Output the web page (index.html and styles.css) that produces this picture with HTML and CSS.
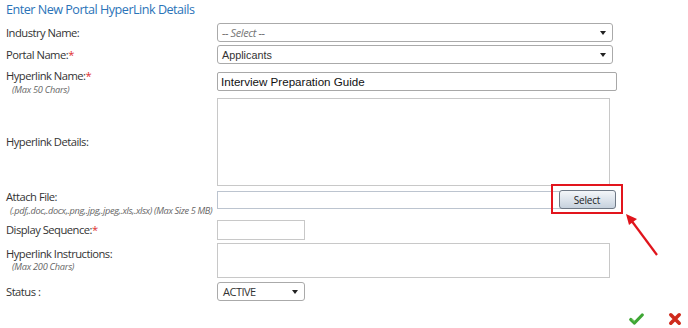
FILE: index.html
```html
<!DOCTYPE html>
<html>
<head>
<meta charset="utf-8">
<link rel="stylesheet" href="styles.css">
</head>
<body>
<div class="page">
  <h1 class="title">Enter New Portal HyperLink Details</h1>
  <div class="row r1">
    <div class="label">Industry Name:</div>
    <div class="ctl"><div class="select wide"><span class="ph">-- Select --</span><span class="caret"></span></div></div>
  </div>
  <div class="row r2">
    <div class="label">Portal Name:<span class="req">*</span></div>
    <div class="ctl"><div class="select wide"><span class="val">Applicants</span><span class="caret"></span></div></div>
  </div>
  <div class="row r3 top">
    <div class="label">Hyperlink Name:<span class="req">*</span><div class="hint">(Max 50 Chars)</div></div>
    <div class="ctl"><div class="input name">Interview Preparation Guide</div></div>
  </div>
  <div class="row r4">
    <div class="label">Hyperlink Details:</div>
    <div class="ctl"><div class="textarea details"></div></div>
  </div>
  <div class="row r5 top">
    <div class="label">Attach File:<div class="hint hint2">(.pdf,.doc,.docx,.png,.jpg,.jpeg,.xls,.xlsx) (Max Size 5 MB)</div></div>
    <div class="ctl file">
      <div class="input filebox"></div>
      <div class="btnwrap"><button class="btn">Select</button></div>
      <svg class="arrow" width="40" height="50" viewBox="0 0 40 50"><line x1="34" y1="44" x2="8" y2="9" stroke="#e0141c" stroke-width="2.2"/><polygon points="3,3 14,8 6,14" fill="#e0141c"/></svg>
    </div>
  </div>
  <div class="row r6">
    <div class="label">Display Sequence:<span class="req">*</span></div>
    <div class="ctl"><div class="input seq"></div></div>
  </div>
  <div class="row r7 top">
    <div class="label">Hyperlink Instructions:<div class="hint">(Max 200 Chars)</div></div>
    <div class="ctl"><div class="textarea instr"></div></div>
  </div>
  <div class="row r8">
    <div class="label">Status :</div>
    <div class="ctl"><div class="select status"><span class="val2">ACTIVE</span><span class="caret"></span></div></div>
  </div>
  <div class="actions">
    <svg class="ok" width="15" height="12" viewBox="0 0 15 12"><path d="M1.8 6.5 L5.5 10 L13.2 2" fill="none" stroke="#3ea634" stroke-width="3.2" stroke-linecap="round" stroke-linejoin="round"/><path d="M2.6 6 L5.4 8.6" stroke="#86d872" stroke-width="0.9" fill="none"/></svg>
    <svg class="cancel" width="14" height="14" viewBox="0 0 14 14"><path d="M2.8 2.8 L11.2 11.2 M11.2 2.8 L2.8 11.2" stroke="#cf2a1c" stroke-width="3.6" stroke-linecap="round"/></svg>
  </div>
</div>
</body>
</html>
```
FILE: styles.css
```css
* { box-sizing: border-box; }
body { margin: 0; background: #fff; font-family: "Open Sans", "Noto Sans", sans-serif; color: #333; }
.page { padding: 1px 0 0 6px; width: 688px; height: 328px; position: relative; }
.title { margin: 0; font-size: 12.6px; font-weight: normal; color: #2a73b8; line-height: 18px; height: 22px; letter-spacing: -0.5px; }
.row { display: flex; align-items: center; }
.row.top { align-items: flex-start; }
.label { width: 211px; font-size: 11.2px; line-height: 14px; color: #333; letter-spacing: -0.5px; }
.req { color: #e03030; }
.hint { font-size: 9.2px; font-style: italic; color: #666; padding-left: 6px; line-height: 12px; letter-spacing: -0.25px; }
.hint.hint2 { padding-left: 4px; letter-spacing: -0.35px; }
.ctl { flex: 1; display: flex; align-items: center; }
.select { height: 19px; border: 1px solid #aaa; border-radius: 3px; background: #fff; display: flex; align-items: center; justify-content: space-between; padding: 0 6px 0 4px; }
.select.wide { width: 396px; }
.caret { width: 0; height: 0; border-left: 3.5px solid transparent; border-right: 3.5px solid transparent; border-top: 4px solid #222; }
.ph { font-size: 11px; font-style: italic; color: #777; letter-spacing: -0.4px; }
.val { font-family: "Liberation Sans", Arial, sans-serif; font-size: 10.8px; color: #333; }
.val2 { font-size: 11px; color: #333; letter-spacing: -0.5px; }
.input { border: 1px solid #b5b5b5; background: #fff; }
.input.name { width: 400px; height: 19px; border-color: #a8a8a8; border-radius: 2px; font-family: "Liberation Sans", Arial, sans-serif; font-size: 11.6px; color: #111; line-height: 17px; padding-left: 3px; }
.textarea { border: 1px solid #c8c8c8; background: #fff; }
.textarea.details { width: 393px; height: 88px; }
.r1 { margin-top: 0; height: 19px; }
.r2 { margin-top: 3px; height: 19px; }
.r3 { margin-top: 8px; }
.r3 .label { margin-top: -3px; }
.r3 .hint { margin-top: 1px; }
.r4 { margin-top: 2px; }
.r5 { margin-top: 5px; }
.r5 .label { margin-top: -1px; }
.r5 .hint { margin-top: 1px; }
.file { position: relative; height: 18px; }
.filebox { width: 393px; height: 18px; border-color: #bcc4cf; }
.btnwrap { position: absolute; left: 334px; top: -7px; width: 72px; height: 30px; border: 2.5px solid #e2151d; display: flex; align-items: center; justify-content: center; }
.btn { width: 57px; height: 19px; margin-top: 1px; border: 1px solid #6e7885; border-radius: 3px; background: linear-gradient(#f3f6f9, #dde4ec 50%, #c6d1dd); font-family: "Open Sans", sans-serif; font-size: 10px; color: #222; padding: 0; letter-spacing: -0.2px; }
.arrow { position: absolute; left: 406px; top: 20px; }
.r6 { margin-top: 3px; }
.input.seq { width: 88px; height: 20px; border-color: #c8c8c8; }
.r7 { margin-top: 3px; }
.r7 .label { margin-top: 4px; }
.textarea.instr { width: 393px; height: 35px; }
.r8 { margin-top: 4px; }
.select.status { width: 88px; padding-left: 5px; }
.actions { position: absolute; left: 629px; top: 312px; display: flex; align-items: center; gap: 24px; }
```
